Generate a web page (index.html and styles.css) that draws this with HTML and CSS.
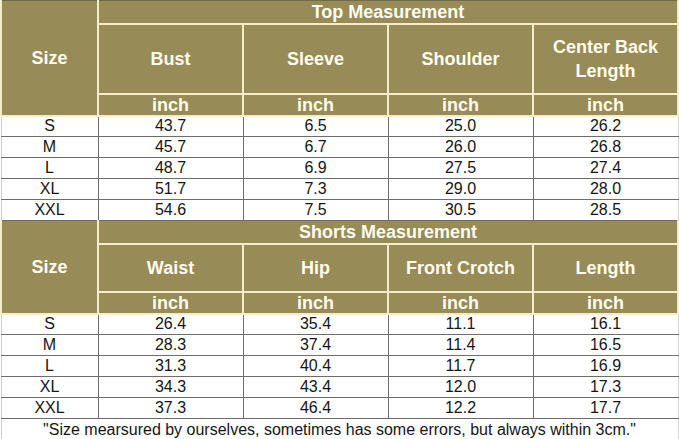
FILE: index.html
```html
<!DOCTYPE html>
<html>
<head>
<meta charset="utf-8">
<link rel="stylesheet" href="styles.css">
</head>
<body>
<table class="chart">
  <colgroup>
    <col class="c-size"><col class="c-m"><col class="c-m"><col class="c-m"><col class="c-m">
  </colgroup>
  <tbody>
    <tr class="r-title">
      <th class="hd size" rowspan="3">Size</th>
      <th class="hd" colspan="4">Top Measurement</th>
    </tr>
    <tr class="r-name tall">
      <th class="hd">Bust</th>
      <th class="hd">Sleeve</th>
      <th class="hd">Shoulder</th>
      <th class="hd">Center Back<br>Length</th>
    </tr>
    <tr class="r-unit">
      <th class="hd">inch</th><th class="hd">inch</th><th class="hd">inch</th><th class="hd">inch</th>
    </tr>
    <tr class="r-data"><td>S</td><td>43.7</td><td>6.5</td><td>25.0</td><td>26.2</td></tr>
    <tr class="r-data"><td>M</td><td>45.7</td><td>6.7</td><td>26.0</td><td>26.8</td></tr>
    <tr class="r-data"><td>L</td><td>48.7</td><td>6.9</td><td>27.5</td><td>27.4</td></tr>
    <tr class="r-data"><td>XL</td><td>51.7</td><td>7.3</td><td>29.0</td><td>28.0</td></tr>
    <tr class="r-data"><td>XXL</td><td>54.6</td><td>7.5</td><td>30.5</td><td>28.5</td></tr>

    <tr class="r-title">
      <th class="hd size" rowspan="3">Size</th>
      <th class="hd" colspan="4">Shorts Measurement</th>
    </tr>
    <tr class="r-name short">
      <th class="hd">Waist</th>
      <th class="hd">Hip</th>
      <th class="hd">Front Crotch</th>
      <th class="hd">Length</th>
    </tr>
    <tr class="r-unit">
      <th class="hd">inch</th><th class="hd">inch</th><th class="hd">inch</th><th class="hd">inch</th>
    </tr>
    <tr class="r-data"><td>S</td><td>26.4</td><td>35.4</td><td>11.1</td><td>16.1</td></tr>
    <tr class="r-data"><td>M</td><td>28.3</td><td>37.4</td><td>11.4</td><td>16.5</td></tr>
    <tr class="r-data"><td>L</td><td>31.3</td><td>40.4</td><td>11.7</td><td>16.9</td></tr>
    <tr class="r-data"><td>XL</td><td>34.3</td><td>43.4</td><td>12.0</td><td>17.3</td></tr>
    <tr class="r-data"><td>XXL</td><td>37.3</td><td>46.4</td><td>12.2</td><td>17.7</td></tr>
    <tr class="r-note">
      <td colspan="5">"Size mearsured by ourselves, sometimes has some errors, but always within 3cm."</td>
    </tr>
  </tbody>
</table>
</body>
</html>
```

FILE: styles.css
```css
html, body {
  margin: 0;
  padding: 0;
  background: #ffffff;
}

.chart {
  width: 677px;
  table-layout: fixed;
  border-collapse: collapse;
  font-family: "Liberation Sans", Arial, sans-serif;
  color: #151515;
}

.c-size { width: 97px; }
.c-m { width: 145px; }

.chart th,
.chart td {
  padding: 0;
  text-align: center;
  vertical-align: middle;
}

.hd {
  background: #978b57;
  color: #fffcef;
  font-weight: bold;
  font-size: 18px;
  line-height: 24px;
  border: 2px solid #f4edc6;
}

.r-title { height: 23px; }
.r-title .hd { line-height: 18px; border-top: 1px solid #6f6a4c; }
.r-name.tall { height: 70px; }
.r-name.short { height: 48px; }
.r-unit { height: 22px; }
.r-unit .hd { line-height: 18px; }

.r-data { height: 21px; }
.r-data td {
  font-size: 16px;
  line-height: 18px;
  border: 1px solid #6d6d6d;
}
.r-data td:first-child { border-left: 1px solid #cfcfcf; }
.r-data td:last-child { border-right: 1px solid #d8d8d8; }

.r-note { height: 21px; }
.r-note td {
  font-size: 16px;
  line-height: 19px;
  border-top: 1px solid #6d6d6d;
  border-left: 1px solid #cfcfcf;
  border-right: 1px solid #d8d8d8;
  border-bottom: 1px solid #dcdcdc;
  color: #161616;
}
```
